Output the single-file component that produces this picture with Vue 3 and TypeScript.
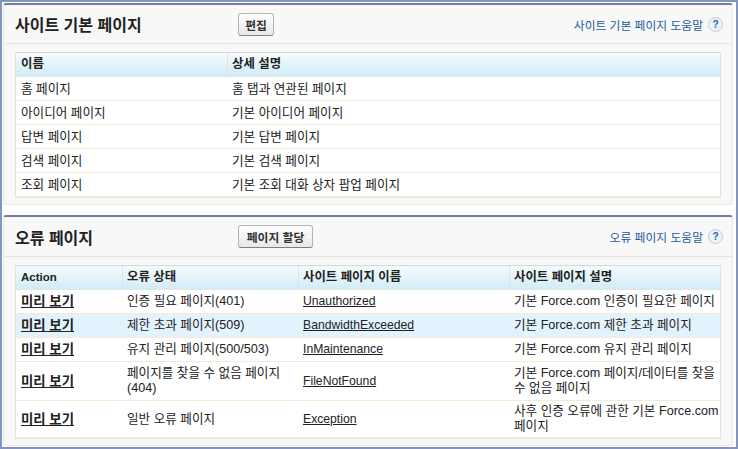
<script setup lang="ts">
const basicRows = [
  ['홈 페이지', '홈 탭과 연관된 페이지'],
  ['아이디어 페이지', '기본 아이디어 페이지'],
  ['답변 페이지', '기본 답변 페이지'],
  ['검색 페이지', '기본 검색 페이지'],
  ['조회 페이지', '기본 조회 대화 상자 팝업 페이지'],
]
const errorRows = [
  { status: '인증 필요 페이지(401)', name: 'Unauthorized', desc: '기본 Force.com 인증이 필요한 페이지', cls: '' },
  { status: '제한 초과 페이지(509)', name: 'BandwidthExceeded', desc: '기본 Force.com 제한 초과 페이지', cls: 'hl' },
  { status: '유지 관리 페이지(500/503)', name: 'InMaintenance', desc: '기본 Force.com 유지 관리 페이지', cls: '' },
  { status: '페이지를 찾을 수 없음 페이지 (404)', name: 'FileNotFound', desc: '기본 Force.com 페이지/데이터를 찾을 수 없음 페이지', cls: 'r4' },
  { status: '일반 오류 페이지', name: 'Exception', desc: '사후 인증 오류에 관한 기본 Force.com 페이지', cls: 'r5' },
]
</script>

<template>
  <div class="frame">
    <section class="panel first">
      <header class="head">
        <h2 class="title">사이트 기본 페이지</h2>
        <button class="btn edit">편집</button>
        <a class="help">사이트 기본 페이지 도움말<span class="q">?</span></a>
      </header>
      <div class="body">
        <div class="table basic">
          <div class="row th"><div>이름</div><div>상세 설명</div></div>
          <div v-for="r in basicRows" :key="r[0]" class="row td"><div>{{ r[0] }}</div><div>{{ r[1] }}</div></div>
        </div>
      </div>
    </section>
    <section class="panel second">
      <header class="head">
        <h2 class="title">오류 페이지</h2>
        <button class="btn assign">페이지 할당</button>
        <a class="help">오류 페이지 도움말<span class="q">?</span></a>
      </header>
      <div class="body">
        <div class="table err">
          <div class="row th"><div class="latin">Action</div><div>오류 상태</div><div>사이트 페이지 이름</div><div>사이트 페이지 설명</div></div>
          <div v-for="r in errorRows" :key="r.name" class="row td" :class="r.cls">
            <div><a class="preview">미리 보기</a></div>
            <div>{{ r.status }}</div>
            <div><a class="link">{{ r.name }}</a></div>
            <div class="desc">{{ r.desc }}</div>
          </div>
        </div>
      </div>
    </section>
  </div>
</template>

<style>
html, body { margin: 0; background: #fff; }
</style>

<style scoped>
.frame {
  box-sizing: border-box;
  width: 738px;
  height: 449px;
  background: #fff;
  border: 2px solid #8496bd;
  padding: 0 1px;
  font-family: "Liberation Sans", "Noto Sans CJK KR", sans-serif;
  font-size: 12.6px;
  color: #222;
  overflow: hidden;
}
.panel {
  box-sizing: border-box;
  width: 730px;
  background: #f8f8f8;
  border: 1px solid #eaeaea;
  border-top: 2px solid #717e9e;
  border-radius: 3px;
}
.first { height: 202px; margin-top: 1px; }
.second { height: 231px; margin-top: 10px; }
.head {
  display: flex;
  align-items: center;
  box-sizing: border-box;
  height: 39px;
  border-bottom: 1px solid #e6e6e6;
  padding: 0 9px 0 11px;
}
.second .head { height: 40px; }
.title {
  margin: 0;
  width: 223px;
  font-size: 16px;
  font-weight: 700;
  color: #222;
  white-space: nowrap;
}
.btn {
  font-family: inherit;
  font-size: 11.8px;
  font-weight: 700;
  color: #333;
  background: linear-gradient(#fff, #e8e8e8);
  border: 1px solid #b5b5b5;
  border-bottom-color: #7f7f7f;
  border-radius: 3px;
  height: 23px;
  padding: 0;
}
.edit { width: 36px; }
.assign { width: 75px; }
.help {
  margin-left: auto;
  color: #1a5c9e;
  font-size: 11.8px;
  display: flex;
  align-items: center;
  white-space: nowrap;
}
.q {
  width: 13px;
  height: 13px;
  margin-left: 5px;
  border-radius: 50%;
  background: #eef1f6;
  border: 1px solid #c6cbd3;
  color: #1468b8;
  font-size: 10px;
  font-weight: 700;
  line-height: 13px;
  text-align: center;
}
.body { padding: 8px 0 0 11px; }
.table {
  box-sizing: border-box;
  width: 706px;
  background: #fff;
  border: 1px solid #e6e3d0;
  border-top-color: #d8d8d8;
  border-bottom: 2px solid #ece8d2;
}
.row { display: grid; }
.basic .row { grid-template-columns: 211px 1fr; }
.err .row { grid-template-columns: 106px 176px 211px 1fr; }
.th {
  height: 24px;
  background: linear-gradient(#f4fbfd, #d2ecf6);
  border-bottom: 1px solid #dfe6ea;
  font-size: 12.4px;
  font-weight: 700;
  color: #222;
  box-sizing: border-box;
}
.th > div {
  padding: 0 5px 0 4px;
  line-height: 23px;
  border-left: 1px solid #d8e4ea;
  white-space: nowrap;
}
.th > div:first-child { border-left: 0; padding-left: 5px; }
.th > .latin { font-size: 11.5px; }
.td {
  height: 24px;
  box-sizing: border-box;
  border-bottom: 1px solid #f1ecd2;
}
.td > div {
  display: flex;
  align-items: center;
  padding: 0 5px;
  line-height: 15px;
}
.td > .desc { padding-right: 1px; }
.basic .td > div { padding-top: 1px; }
.basic .td:last-child { height: 23px; }
.td:last-child { border-bottom: 0; }
.hl { background: #e3f3fd; }
.r4 { height: 39px; }
.r5 { height: 36px; }
.preview { font-size: 13.4px; font-weight: 700; text-decoration: underline; color: #222; white-space: nowrap; }
.link { font-size: 12.2px; text-decoration: underline; color: #222; white-space: nowrap; }
</style>
